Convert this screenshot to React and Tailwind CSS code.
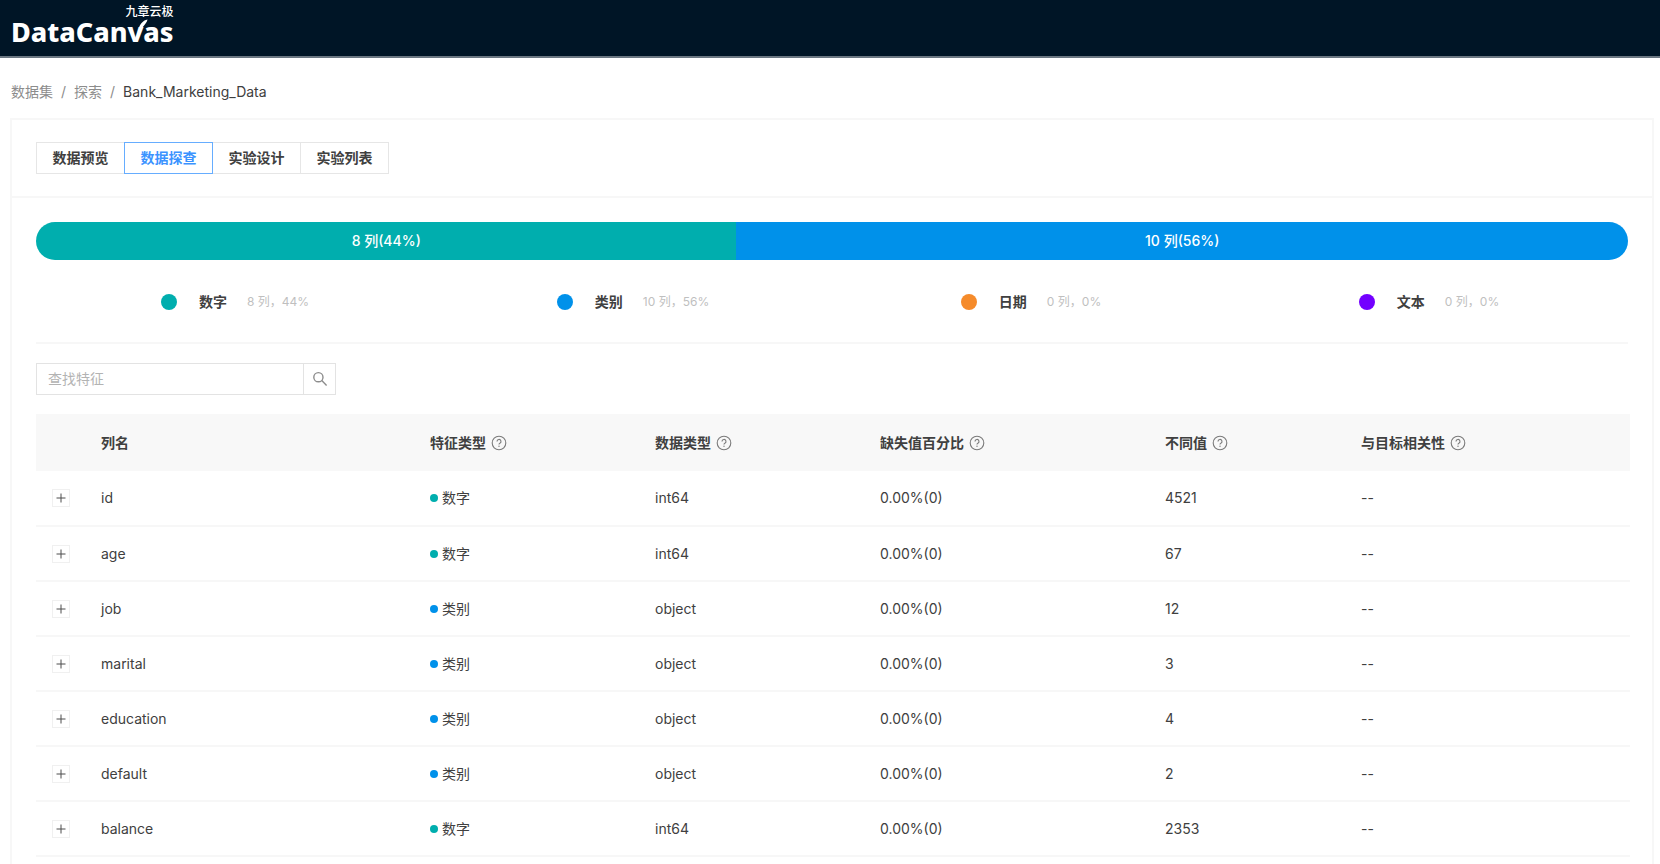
import React, { useState } from "react";

const tabs = ["数据预览", "数据探查", "实验设计", "实验列表"];

const featureTypes = [
  { name: "数字", count: 8, percent: 44, dot: "bg-[#00aeae]" },
  { name: "类别", count: 10, percent: 56, dot: "bg-[#0091ea]" },
  { name: "日期", count: 0, percent: 0, dot: "bg-[#f58b2b]" },
  { name: "文本", count: 0, percent: 0, dot: "bg-[#7300ff]" },
];

const columns = [
  { title: "列名", width: "w-[329px]", help: false },
  { title: "特征类型", width: "w-[225px]", help: true },
  { title: "数据类型", width: "w-[225px]", help: true },
  { title: "缺失值百分比", width: "w-[285px]", help: true },
  { title: "不同值", width: "w-[196px]", help: true },
  { title: "与目标相关性", width: "w-[285px]", help: true },
];

const rows = [
  { name: "id", type: "数字", dataType: "int64", missing: "0.00%(0)", unique: 4521 },
  { name: "age", type: "数字", dataType: "int64", missing: "0.00%(0)", unique: 67 },
  { name: "job", type: "类别", dataType: "object", missing: "0.00%(0)", unique: 12 },
  { name: "marital", type: "类别", dataType: "object", missing: "0.00%(0)", unique: 3 },
  { name: "education", type: "类别", dataType: "object", missing: "0.00%(0)", unique: 4 },
  { name: "default", type: "类别", dataType: "object", missing: "0.00%(0)", unique: 2 },
  { name: "balance", type: "数字", dataType: "int64", missing: "0.00%(0)", unique: 2353 },
];

function HelpIcon() {
  return (
    <svg
      viewBox="0 0 16 16"
      className="h-4 w-4 shrink-0 text-[#7a7a7a]"
      fill="none"
      stroke="currentColor"
      aria-hidden="true"
    >
      <circle cx="8" cy="8" r="6.8" strokeWidth="1.1" />
      <path d="M6 6.4a2 2 0 1 1 2.9 1.8c-.6.3-.9.6-.9 1.3" strokeWidth="1.1" />
      <circle cx="8" cy="11.3" r="0.7" fill="currentColor" stroke="none" />
    </svg>
  );
}

function SearchIcon() {
  return (
    <svg
      viewBox="0 0 16 16"
      className="h-4 w-4 text-[#8c8c8c]"
      fill="none"
      stroke="currentColor"
      strokeWidth="1.4"
      aria-hidden="true"
    >
      <circle cx="6.4" cy="6.2" r="4.6" />
      <path d="M9.8 9.6l4.8 4.8" />
    </svg>
  );
}

function Logo() {
  return (
    <a href="#" className="relative block w-fit text-white">
      <span className="block pt-1 text-right text-xs leading-4 font-medium">
        九章云极
      </span>
      <span className="block font-['Noto_Sans',sans-serif] text-[27px] leading-6 font-extrabold">
        DataCanvas
      </span>
      {/* Tick that extends the v */}
      <svg viewBox="0 0 10 9" className="absolute top-[19px] right-[26px] h-[9px] w-2.5" aria-hidden="true">
        <path d="M9.5 0.5C9 3.5 7 5 4.5 8.5L1 8.5C2.5 4.5 5 1.5 9.5 0.5Z" fill="white" />
      </svg>
    </a>
  );
}

function App() {
  const [activeTab, setActiveTab] = useState("数据探查");
  const [search, setSearch] = useState("");

  const visibleRows = rows.filter((row) => row.name.includes(search));

  return (
    <div className="flex min-h-screen flex-col bg-white font-['Inter','Noto_Sans_CJK_SC',sans-serif] text-sm text-[#404040]">
      <header className="h-[58px] border-b-2 border-[#6b7782] bg-[#001526] pl-[11px]">
        <Logo />
      </header>

      <nav aria-label="breadcrumb" className="px-[11px] pt-6 pb-4 leading-5">
        <ol className="flex gap-2 text-[#8c8c8c]">
          <li>
            <a href="#">数据集</a>
          </li>
          <li>/</li>
          <li>
            <a href="#">探索</a>
          </li>
          <li>/</li>
          <li className="text-[#404040]">Bank_Marketing_Data</li>
        </ol>
      </nav>

      <main className="mr-1.5 ml-2.5 flex-1 border-2 border-b-0 border-[#f7f7f7]">
        {/* Tabs */}
        <div className="flex border-b-2 border-[#f7f7f7] px-6 py-[22px]">
          {tabs.map((tab) => (
            <button
              key={tab}
              onClick={() => setActiveTab(tab)}
              className={`-mr-px h-8 w-[89px] border font-bold ${
                activeTab === tab
                  ? "z-10 border-[#66adff] text-[#3b93ff]"
                  : "border-[#e6e6e6]"
              }`}
            >
              {tab}
            </button>
          ))}
        </div>

        <div className="px-6 pt-6">
          {/* Share of each feature type */}
          <div className="flex h-[38px] overflow-hidden rounded-full font-medium text-white">
            {featureTypes
              .filter((type) => type.count > 0)
              .map((type) => (
                <div
                  key={type.name}
                  className={`flex items-center justify-center ${type.dot}`}
                  style={{ width: `${type.percent}%` }}
                >
                  {type.count} 列({type.percent}%)
                </div>
              ))}
          </div>

          <ul className="grid grid-cols-4 border-b-2 border-[#f7f7f7] pt-8 pb-[30px]">
            {featureTypes.map((type) => (
              <li key={type.name} className="flex items-center justify-center leading-5">
                <span className={`mr-[22px] h-4 w-4 rounded-full ${type.dot}`} />
                <span className="mr-5 font-bold">{type.name}</span>
                <span className="text-xs text-[#bfbfbf]">
                  {type.count} 列，{type.percent}%
                </span>
              </li>
            ))}
          </ul>

          {/* Search */}
          <form
            className="mt-[19px] flex h-8 w-[300px] border border-[#e3e3e3]"
            onSubmit={(e) => e.preventDefault()}
          >
            <input
              type="text"
              aria-label="查找特征"
              placeholder="查找特征"
              value={search}
              onChange={(e) => setSearch(e.target.value)}
              className="min-w-0 flex-1 px-[11px] outline-none placeholder:text-[#b3b3b3]"
            />
            <button
              type="submit"
              aria-label="搜索"
              className="flex w-8 items-center justify-center border-l border-[#e3e3e3]"
            >
              <SearchIcon />
            </button>
          </form>

          <table className="mt-[19px] w-full table-fixed text-left">
            <thead className="bg-[#f8f8f8]">
              <tr className="h-[57px]">
                <th className="w-[49px]" />
                {columns.map((column) => (
                  <th key={column.title} className={`px-4 font-bold ${column.width}`}>
                    <div className="flex items-center gap-[5px]">
                      {column.title}
                      {column.help && <HelpIcon />}
                    </div>
                  </th>
                ))}
              </tr>
            </thead>
            <tbody>
              {visibleRows.map((row) => (
                <tr key={row.name} className="h-[55px] border-b-2 border-[#f7f7f7]">
                  <td className="pl-4">
                    <button
                      aria-label={`展开 ${row.name}`}
                      className="flex h-[18px] w-[18px] items-center justify-center border border-[#f0f0f0]"
                    >
                      <svg viewBox="0 0 10 10" className="h-2.5 w-2.5" stroke="#4d4d4d" aria-hidden="true">
                        <path d="M0.5 5h9M5 0.5v9" />
                      </svg>
                    </button>
                  </td>
                  <td className="px-4">{row.name}</td>
                  <td className="px-4">
                    <div className="flex items-center gap-1">
                      <span
                        className={`h-2 w-2 rounded-full ${
                          row.type === "数字" ? "bg-[#00aeae]" : "bg-[#0091ea]"
                        }`}
                      />
                      {row.type}
                    </div>
                  </td>
                  <td className="px-4">{row.dataType}</td>
                  <td className="px-4">{row.missing}</td>
                  <td className="px-4">{row.unique}</td>
                  <td className="px-4">--</td>
                </tr>
              ))}
            </tbody>
          </table>
        </div>
      </main>
    </div>
  );
}

export default App;
